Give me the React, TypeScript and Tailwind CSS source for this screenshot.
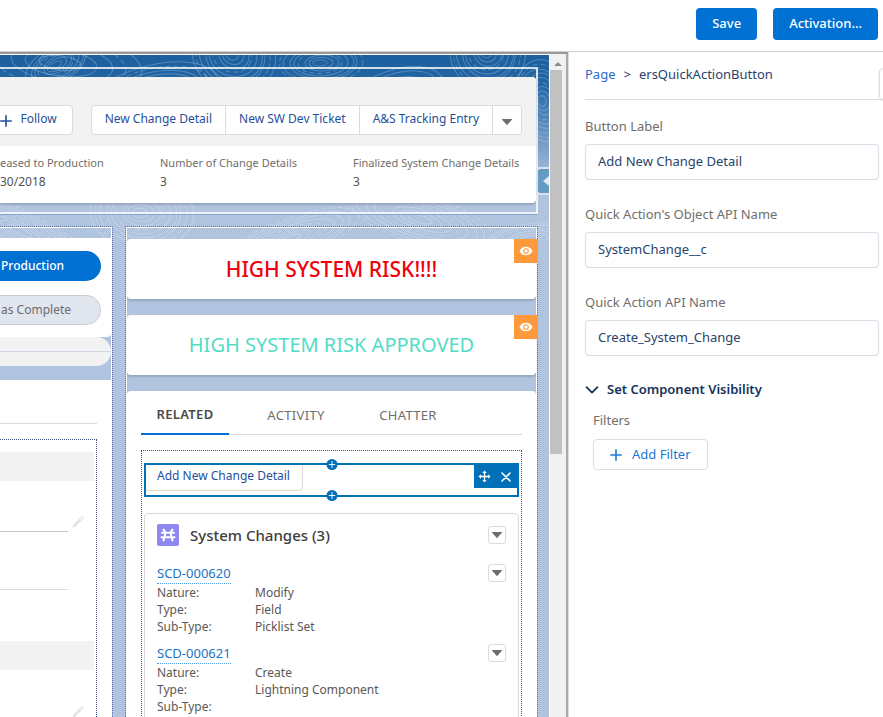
import { useState } from "react";
import type { ReactNode } from "react";

const ringGroups = [
  { x: 56, y: 10, n: 7, rx: 9, ry: 5 },
  { x: 60, y: 8, n: 5, rx: 30, ry: 12 },
  { x: 148, y: 44, n: 9, rx: 15, ry: 7 },
  { x: 232, y: 0, n: 9, rx: 9, ry: 8 },
  { x: 320, y: 8, n: 8, rx: 10, ry: 5 },
  { x: 390, y: 50, n: 7, rx: 16, ry: 9 },
  { x: 486, y: -2, n: 9, rx: 8, ry: 8 },
  { x: 542, y: 46, n: 9, rx: 6, ry: 9 },
  { x: 20, y: 176, n: 8, rx: 19, ry: 5 },
  { x: 140, y: 158, n: 9, rx: 11, ry: 8 },
  { x: 290, y: 184, n: 8, rx: 17, ry: 5 },
  { x: 420, y: 164, n: 8, rx: 18, ry: 6 },
  { x: 530, y: 184, n: 6, rx: 14, ry: 5 },
];

function Contours() {
  return (
    <svg
      aria-hidden="true"
      className="absolute inset-x-0 top-0 h-[186px] w-full"
      viewBox="0 0 549 186"
      preserveAspectRatio="xMinYMin slice"
      fill="none"
      stroke="#fff"
      strokeOpacity="0.24"
    >
      {ringGroups.map((g, i) =>
        Array.from({ length: g.n }, (_, k) => (
          <ellipse
            key={`${i}-${k}`}
            cx={g.x + (k % 3)}
            cy={g.y}
            rx={g.rx * (k * 0.5 + 0.7)}
            ry={g.ry * (k * 0.5 + 0.6)}
            transform={`rotate(${((i * 37) % 60) - 30} ${g.x} ${g.y})`}
            strokeDasharray={k % 4 === 3 ? "5 3" : undefined}
          />
        )),
      )}
    </svg>
  );
}

function PlusIcon({ className }: { className: string }) {
  return (
    <svg aria-hidden="true" viewBox="0 0 12 12" className={className} stroke="currentColor" strokeWidth="1.6" strokeLinecap="round">
      <path d="M6 .8v10.4M.8 6h10.4" />
    </svg>
  );
}

function Caret({ className }: { className: string }) {
  return (
    <svg aria-hidden="true" viewBox="0 0 10 6" className={className} fill="currentColor">
      <path d="M.4 0h9.2c.4 0 .5.4.3.7L5.4 5.8a.5.5 0 0 1-.8 0L.1.7C-.1.4 0 0 .4 0Z" />
    </svg>
  );
}

function Pencil() {
  return (
    <svg aria-hidden="true" viewBox="0 0 12 12" className="h-3 w-3" fill="#e6e4e3">
      <path d="M.5 11.5l.7-2.8L7.8 2l2.1 2.1-6.6 6.7zM8.4 1.4l.8-.8c.3-.3.7-.3 1 0l1.2 1.2c.3.3.3.7 0 1l-.8.8z" />
    </svg>
  );
}

function HighlightField({ label, value, className }: { label: string; value: string; className: string }) {
  return (
    <div className={className}>
      <dt className="text-[11px] leading-4 text-[#706e6b]">{label}</dt>
      <dd className="mt-[3px] text-[12px] leading-4 text-[#55534f]">{value}</dd>
    </div>
  );
}

function RiskCard({ children, className }: { children: ReactNode; className: string }) {
  return (
    <section className="relative mb-4 flex h-15 items-center justify-center rounded-sm bg-white shadow-[0_2px_2px_rgba(0,0,0,0.15)]">
      <p className={`leading-6 ${className}`}>{children}</p>
      <span className="absolute -right-0.5 top-0 flex h-6 w-6 items-center justify-center bg-[#ff9a3c]">
        <svg aria-hidden="true" viewBox="0 0 14 10" className="h-2.5 w-3.5">
          <path fill="#fff" d="M7 .8c3 0 5 1.7 6.3 3.8.2.3.2.5 0 .8C12 7.5 10 9.2 7 9.2S2 7.5.7 5.4a.7.7 0 0 1 0-.8C2 2.5 4 .8 7 .8Z" />
          <circle cx="7" cy="5" r="2.3" fill="#fff" stroke="#ff9a3c" strokeWidth="1.1" />
        </svg>
      </span>
    </section>
  );
}

function MenuButton({ label }: { label: string }) {
  return (
    <button aria-label={label} className="flex h-[18px] w-[18px] shrink-0 items-center justify-center rounded-[3px] border border-[#dddbda] bg-white text-[#706e6b]">
      <Caret className="h-1.5 w-2.5" />
    </button>
  );
}

const changes = [
  { id: "SCD-000620", rows: [["Nature:", "Modify"], ["Type:", "Field"], ["Sub-Type:", "Picklist Set"]] },
  { id: "SCD-000621", rows: [["Nature:", "Create"], ["Type:", "Lightning Component"], ["Sub-Type:", ""]] },
];

function InsertPoint({ className }: { className: string }) {
  return (
    <button aria-label="Insert component" className={`absolute left-1/2 flex h-[11px] w-[11px] -translate-x-1/2 items-center justify-center rounded-full bg-[#0070b8] text-white ${className}`}>
      <PlusIcon className="h-[7px] w-[7px]" />
    </button>
  );
}

function Canvas() {
  return (
    <main className="relative min-w-0 flex-1 overflow-hidden border-t border-white bg-[linear-gradient(180deg,#1b5f9f_0px,#2466a4_30px,#b0c4df_130px)]">
      <Contours />
      <div className="relative pt-3">
        {/* Record header */}
        <div className="mr-[11px] border-y-2 border-r-2 border-white/80 pt-2 pb-[9px] shadow-[0_1px_0_#8ba3c8]">
          <header className="overflow-hidden rounded-r-sm bg-white shadow-[0_2px_2px_rgba(0,0,0,0.15)]">
            <div className="flex justify-end bg-[#f3f2f2] pt-7 pr-3.5 pb-[11px] text-[12px] whitespace-nowrap text-[#1f4f99]">
              <button className="mr-[18px] flex h-[30px] flex-1 items-center justify-end rounded-r-sm border border-l-0 border-[#dddbda] bg-white pr-[15px] pb-0.5">
                <PlusIcon className="mt-1 mr-2 h-3 w-3" />
                Follow
              </button>
              <div className="flex h-[30px] divide-x divide-[#dddbda] rounded-sm border border-[#dddbda] bg-white">
                <button className="px-[13px] pb-0.5">New Change Detail</button>
                <button className="px-[13px] pb-0.5">New SW Dev Ticket</button>
                <button className="px-[13px] pb-0.5">A&amp;S Tracking Entry</button>
                <button aria-label="More actions" className="flex w-7 items-center justify-center pt-1 text-[#706e6b]">
                  <Caret className="h-1.5 w-2.5" />
                </button>
              </div>
            </div>
            <dl className="flex h-[57px] pt-[9px] whitespace-nowrap">
              <HighlightField className="w-40" label="eased to Production" value="30/2018" />
              <HighlightField className="w-[193px]" label="Number of Change Details" value="3" />
              <HighlightField className="min-w-0 flex-1" label="Finalized System Change Details" value="3" />
            </dl>
          </header>
        </div>

        <div className="mt-3 flex">
          {/* Details column */}
          <div className="mr-3 w-[113px] shrink-0 border-t border-r border-dotted border-[#5b76a5]">
            <div className="border-t border-r border-white pt-2.5">
              <section className="rounded-br-sm bg-white pt-[13px] pr-2.5 pb-3 text-[12px]">
                <button className="mb-3.5 block h-[30px] w-full rounded-r-full bg-[#0070d2] pl-px text-left font-medium text-white">Production</button>
                <button className="block h-[30px] w-full rounded-r-full border border-l-0 border-[#c9cdd6] bg-[#e0e5ee] pl-px text-left text-[#6b6d70]">as Complete</button>
              </section>
              <div className="mb-3.5 h-[29px] rounded-r-full bg-[linear-gradient(#f3f2f2_14px,#cfd6e4_14px,#cfd6e4_15px,#f3f2f2_15px)]" />
              <section className="h-[400px] bg-white pr-3.5">
                <div className="h-[44px] border-b border-[#dddbda]" />
                <div className="mt-[15px] h-[400px] border-t border-r border-dotted border-[#3b4a80] pt-3 pr-0.5">
                  <div className="h-[29px] bg-[#f3f2f2]" />
                  <div className="flex h-[51px] items-end">
                    <div className="h-full w-[68px] border-b border-[#c9c7c5]" />
                    <span className="mb-1 ml-1"><Pencil /></span>
                  </div>
                  <div className="h-[58px] w-[68px] border-b border-[#dddbda]" />
                  <div className="mt-[51px] h-[29px] bg-[#f3f2f2]" />
                  <div className="mt-9 ml-[72px]"><Pencil /></div>
                </div>
              </section>
            </div>
          </div>

          {/* Related column */}
          <div className="mr-[11px] min-w-0 flex-1 border-x border-t border-dotted border-[#5b76a5]">
            <div className="border-x border-t border-white pt-[11px]">
              <RiskCard className="text-[21px] font-medium text-[#f0000c]">HIGH SYSTEM RISK!!!!</RiskCard>
              <RiskCard className="text-[20px] text-[#52dcc6]">HIGH SYSTEM RISK APPROVED</RiskCard>
              <section className="h-[420px] rounded-t-sm bg-white px-3.5 pt-1.5">
                <div role="tablist" className="flex gap-[22px] border-b border-[#dddbda] text-[13px] tracking-wide text-[#706e6b]">
                  <button role="tab" aria-selected="true" className="-mb-px h-[38px] w-22 border-b-2 border-[#0070d2] font-semibold text-[#4a4845]">RELATED</button>
                  <button role="tab" aria-selected="false" className="h-[37px] w-[90px]">ACTIVITY</button>
                  <button role="tab" aria-selected="false" className="h-[37px] w-[90px]">CHATTER</button>
                </div>
                <div className="mt-[15px] h-[400px] border-x border-t border-dotted border-[#3b4a80] px-0.5 pt-3">
                  <div className="relative flex h-[34px] items-start justify-between border-2 border-[#0070b8]">
                    <button className="h-[26px] rounded-br-sm border-r border-b border-[#dddbda] bg-white pr-3 pb-1 pl-[11px] text-[12px] text-[#1f4f99]">Add New Change Detail</button>
                    <div className="flex h-[23px] w-[43px] items-center justify-between bg-[#0070b8] px-1 text-white">
                      <button aria-label="Move component">
                        <svg aria-hidden="true" viewBox="0 0 14 14" className="h-[13px] w-[13px]" fill="currentColor">
                          <path d="M7 .5 9.4 3.2H7.7v3.1h3.1V4.6L13.5 7l-2.7 2.4V7.7H7.7v3.1h1.7L7 13.5l-2.4-2.7h1.7V7.7H3.2v1.7L.5 7l2.7-2.4v1.7h3.1V3.2H4.6z" />
                        </svg>
                      </button>
                      <button aria-label="Remove component" className="mr-0.5">
                        <svg aria-hidden="true" viewBox="0 0 10 10" className="h-2.5 w-2.5" stroke="currentColor" strokeWidth="1.6" strokeLinecap="round">
                          <path d="M1 1l8 8M9 1L1 9" />
                        </svg>
                      </button>
                    </div>
                    <InsertPoint className="-top-1.5" />
                    <InsertPoint className="-bottom-1.5" />
                  </div>

                  <section className="mt-4 h-[340px] rounded-t-sm border border-[#dddbda] px-3 pt-2.5">
                    <div className="flex h-[22px] items-center">
                      <svg aria-hidden="true" viewBox="0 0 22 22" className="mr-[11px] h-[22px] w-[22px]">
                        <rect width="22" height="22" rx="2" fill="#8f88ee" />
                        <path
                          d="M6.500 5.500C8.500 7 8.300 9 8 11s-1 3.500-1.500 5.500M15.500 5.500C13.500 7 13.700 9 14 11s1 3.500 1.500 5.500M5 8.700h12M4.500 13.300h13"
                          fill="none"
                          stroke="#fff"
                          strokeWidth="2"
                          strokeLinecap="round"
                        />
                      </svg>
                      <h2 className="mr-auto text-[15px] leading-5 font-medium text-[#3e3e3c]">System Changes (3)</h2>
                      <MenuButton label="System Changes menu" />
                    </div>
                    <ul className="mt-[18px]">
                      {changes.map((c) => (
                        <li key={c.id} className="mb-[9px] flex items-start justify-between text-[12px] text-[#5a5856]">
                          <div>
                            <a href="#" className="block w-fit border-b border-dotted border-[#4a9be0] text-[13px] leading-[19px] text-[#1a73c8]">{c.id}</a>
                            <dl>
                              {c.rows.map(([k, v]) => (
                                <div key={k} className="flex leading-[17px]">
                                  <dt className="w-[98px]">{k}</dt>
                                  <dd>{v}</dd>
                                </div>
                              ))}
                            </dl>
                          </div>
                          <MenuButton label={`${c.id} menu`} />
                        </li>
                      ))}
                    </ul>
                  </section>
                </div>
              </section>
            </div>
          </div>
        </div>
      </div>
      {/* Collapsed panel handle */}
      <button aria-label="Expand panel" className="absolute top-28 right-0 flex h-7 w-[13px] items-center justify-end rounded-l-sm border-2 border-r-0 border-[#d9e3ef] bg-[#639cc0]">
        <svg aria-hidden="true" viewBox="0 0 6 10" className="h-2.5 w-1.5" fill="#dce9f4">
          <path d="M6 0v10L0 5z" />
        </svg>
      </button>
    </main>
  );
}

function Field({ id, label, initial }: { id: string; label: string; initial: string }) {
  const [value, setValue] = useState(initial);
  return (
    <div className="mb-6">
      <label htmlFor={id} className="block text-[13px] leading-5 text-[#706e6b]">{label}</label>
      <input
        id={id}
        value={value}
        onChange={(e) => setValue(e.target.value)}
        className="mt-2 block h-9 w-full rounded-sm border border-[#d8dde6] bg-white px-3 pb-0.5 text-[13px] text-[#2b4369]"
      />
    </div>
  );
}

function PropertyPanel() {
  return (
    <aside className="relative w-[315px] shrink-0 overflow-hidden border-l border-[#d8dde6] bg-white pr-1 pl-4">
      <nav aria-label="Breadcrumb" className="flex h-12 items-center border-b border-[#d8dde6] pb-0.5 text-[13px] text-[#2b4369]">
        <a href="#" className="text-[#2a6cc8]">Page</a>
        <span className="mx-2">&gt;</span>
        <span>ersQuickActionButton</span>
      </nav>
      <div className="absolute top-4 -right-1 h-8 w-2 rounded-l-sm border border-[#d8dde6] bg-white shadow-sm" />
      <div className="pt-4">
        <Field id="button-label" label="Button Label" initial="Add New Change Detail" />
        <Field id="object-api-name" label="Quick Action's Object API Name" initial="SystemChange__c" />
        <Field id="action-api-name" label="Quick Action API Name" initial="Create_System_Change" />
      </div>
      <button className="flex h-5 items-center text-[13px] font-semibold text-[#16325c]">
        <svg aria-hidden="true" viewBox="0 0 14 8" className="mr-2 h-2 w-3.5" fill="none" stroke="currentColor" strokeWidth="1.8" strokeLinecap="round" strokeLinejoin="round">
          <path d="M1.5 1.2L7 6.6l5.5-5.4" />
        </svg>
        Set Component Visibility
      </button>
      <div className="mt-2.5 pl-2">
        <p className="text-[13px] leading-5 text-[#706e6b]">Filters</p>
        <button className="mt-[9px] flex h-[31px] items-center rounded-sm border border-[#d8dde6] bg-white px-4 text-[13px] text-[#1a7ad4]">
          <PlusIcon className="mr-2.5 h-3 w-3" />
          Add Filter
        </button>
      </div>
    </aside>
  );
}

export default function App() {
  return (
    <div className="flex h-screen flex-col overflow-hidden bg-white font-['Noto_Sans','Open_Sans',sans-serif]">
      <header className="flex h-[52px] shrink-0 items-start justify-end gap-4 border-b border-[#d0d0d0] pt-2 pr-[5px] text-[13px] font-medium text-white">
        <button className="h-8 rounded-sm bg-[#0070d2] px-4">Save</button>
        <button className="h-8 rounded-sm bg-[#0070d2] px-4">Activation...</button>
      </header>
      <div className="flex min-h-0 flex-1">
        <div className="flex min-w-0 flex-1 border-t-2 border-[#999] bg-white">
          <Canvas />
          {/* Scroll track */}
          <div aria-hidden="true" className="flex w-[19px] shrink-0 flex-col items-center border-r-2 border-l border-r-[#a9a9a9] border-l-white bg-[#f1f1f1]">
            <svg viewBox="0 0 8 4" className="mt-2 mb-1 h-1 w-2" fill="#8b8b8b">
              <path d="M4 0l4 4H0z" />
            </svg>
            <div className="mr-1 h-[384px] w-3 bg-[#c1c1c1]" />
          </div>
        </div>
        <PropertyPanel />
      </div>
    </div>
  );
}
